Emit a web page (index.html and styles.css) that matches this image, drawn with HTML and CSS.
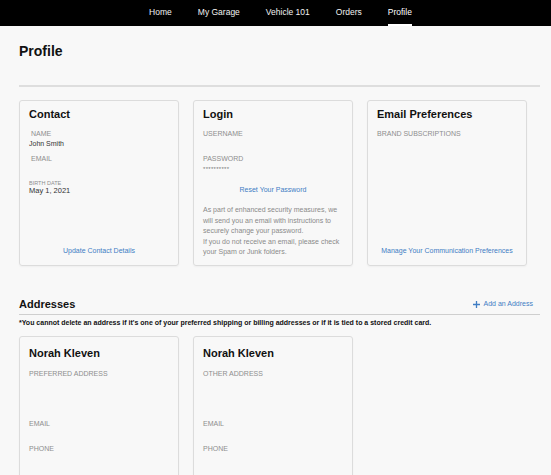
FILE: index.html
```html
<!DOCTYPE html>
<html lang="en">
<head>
    <meta charset="UTF-8">
    <meta name="viewport" content="width=device-width, initial-scale=1.0">
    <title>Profile</title>
    <link rel="stylesheet" href="styles.css">
</head>
<body>
    <nav class="topnav">
        <a href="#">Home</a>
        <a href="#">My Garage</a>
        <a href="#">Vehicle 101</a>
        <a href="#">Orders</a>
        <a href="#" class="active">Profile</a>
    </nav>

    <main class="page">
        <div class="page-title">
            <h1>Profile</h1>
        </div>

        <div class="card-row">
            <div class="card info-card">
                <h2 class="card-title">Contact</h2>
                <div class="field">
                    <div class="label indent">NAME</div>
                    <div class="value">John Smith</div>
                </div>
                <div class="field">
                    <div class="label indent">EMAIL</div>
                    <div class="value"></div>
                </div>
                <div class="field">
                    <div class="label small">BIRTH DATE</div>
                    <div class="value date">May 1, 2021</div>
                </div>
                <a href="#" class="card-link bottom">Update Contact Details</a>
            </div>

            <div class="card info-card">
                <h2 class="card-title">Login</h2>
                <div class="field">
                    <div class="label">USERNAME</div>
                    <div class="value"></div>
                </div>
                <div class="field">
                    <div class="label">PASSWORD</div>
                    <div class="value stars">**********</div>
                </div>
                <a href="#" class="card-link reset">Reset Your Password</a>
                <p class="note-text">
                    As part of enhanced security measures, we will send you an email with instructions to securely change your password.<br>
                    If you do not receive an email, please check your Spam or Junk folders.
                </p>
            </div>

            <div class="card info-card">
                <h2 class="card-title">Email Preferences</h2>
                <div class="field">
                    <div class="label">BRAND SUBSCRIPTIONS</div>
                </div>
                <a href="#" class="card-link bottom">Manage Your Communication Preferences</a>
            </div>
        </div>

        <div class="section-head">
            <h2>Addresses</h2>
            <a href="#" class="add-link">
                <svg width="7" height="7" viewBox="0 0 7 7"><path d="M3.5 0v7M0 3.5h7" stroke="#3f7dc4" stroke-width="1.3"/></svg>
                Add an Address
            </a>
        </div>
        <p class="warning">*You cannot delete an address if it's one of your preferred shipping or billing addresses or if it is tied to a stored credit card.</p>

        <div class="card-row addresses">
            <div class="card address-card">
                <h2 class="card-title">Norah Kleven</h2>
                <div class="label">PREFERRED ADDRESS</div>
                <div class="address"></div>
                <div class="field">
                    <div class="label">EMAIL</div>
                    <div class="value"></div>
                </div>
                <div class="field">
                    <div class="label">PHONE</div>
                    <div class="value"></div>
                </div>
            </div>

            <div class="card address-card">
                <h2 class="card-title">Norah Kleven</h2>
                <div class="label">OTHER ADDRESS</div>
                <div class="address"></div>
                <div class="field">
                    <div class="label">EMAIL</div>
                    <div class="value"></div>
                </div>
                <div class="field">
                    <div class="label">PHONE</div>
                    <div class="value"></div>
                </div>
            </div>
        </div>
    </main>
</body>
</html>
```

FILE: styles.css
```css
html {
    overflow: hidden;
}

body {
    font-family: "Liberation Sans", Arial, sans-serif;
    margin: 0;
    padding: 0;
    background-color: #f8f8f8;
    color: #111;
}

.topnav {
    display: flex;
    justify-content: center;
    gap: 26px;
    height: 26px;
    padding-left: 10px;
    background-color: #000;
}

.topnav a {
    color: #f2f2f2;
    font-size: 8.5px;
    line-height: 24px;
    text-decoration: none;
    border-bottom: 2px solid transparent;
}

.topnav a.active {
    color: #fff;
    border-bottom-color: #fff;
}

.page {
    padding: 0 11px 0 19px;
}

.page-title {
    padding: 17px 0 26px;
    border-bottom: 2px solid #dedede;
}

.page-title h1 {
    margin: 0;
    font-size: 14px;
    line-height: 16px;
}

.card-row {
    display: grid;
    grid-template-columns: repeat(3, 160px);
    gap: 14px;
    margin-top: 13px;
}

.card-row.addresses {
    margin-top: 9px;
}

.card {
    box-sizing: border-box;
    display: flex;
    flex-direction: column;
    border: 1px solid #dcdcdc;
    border-radius: 3px;
    box-shadow: 0 1px 2px rgba(0,0,0,0.04);
    padding: 7px 9px 10px;
}

.info-card {
    height: 166px;
}

.card-title {
    margin: 0 0 9px;
    font-size: 11px;
    line-height: 13px;
    font-weight: bold;
}

.field {
    margin-bottom: 7px;
}

.label {
    color: #8e8e8e;
    font-size: 7px;
    line-height: 8px;
}

.label.indent {
    padding-left: 2px;
}

.label.small {
    font-size: 5.5px;
    line-height: 6px;
}

.value {
    min-height: 8px;
    margin-top: 2px;
    color: #333;
    font-size: 7px;
    line-height: 8px;
}

.value.date {
    margin-top: 0;
    font-size: 7.5px;
    line-height: 9px;
}

.value.stars {
    color: #777;
    font-size: 6px;
    letter-spacing: 0.3px;
}

.card-link {
    display: block;
    color: #3f7dc4;
    font-size: 7px;
    line-height: 8px;
    text-align: center;
    text-decoration: none;
}

.card-link.bottom {
    margin-top: auto;
}

.card-link.reset {
    margin-top: 6px;
}

.note-text {
    margin: 11px 0 0;
    color: #8a8a8a;
    font-size: 7px;
    line-height: 10.6px;
}

.section-head {
    display: flex;
    justify-content: space-between;
    align-items: flex-end;
    margin-top: 32px;
    padding: 0 7px 3px 0;
    border-bottom: 1px solid #cfcfcf;
}

.section-head h2 {
    margin: 0;
    font-size: 11px;
    line-height: 13px;
}

.add-link {
    display: flex;
    align-items: center;
    gap: 4px;
    margin-bottom: 3px;
    color: #3f7dc4;
    font-size: 7px;
    line-height: 8px;
    text-decoration: none;
}

.warning {
    margin: 4px 0 0;
    font-size: 7px;
    line-height: 8px;
    font-weight: bold;
}

.address-card {
    height: 200px;
    padding-top: 10px;
}

.address-card .card-title {
    margin-bottom: 10px;
}

.address {
    height: 42px;
}
```
